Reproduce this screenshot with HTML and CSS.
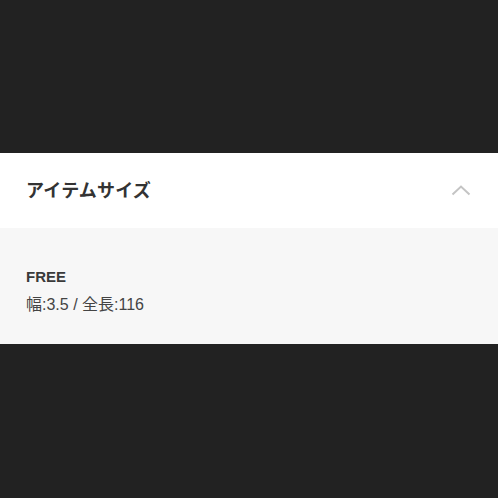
FILE: index.html
```html
<!DOCTYPE html>
<html lang="ja">
<head>
  <meta charset="UTF-8" />
  <title>アイテムサイズ</title>
  <link rel="stylesheet" href="styles.css">
</head>
<body>
  <div class="top-space"></div>

  <div class="accordion">
    <div class="accordion-header">
      <h3>アイテムサイズ</h3>
      <svg class="chevron" width="20" height="12" viewBox="0 0 20 12">
        <polyline points="1.5,10.5 10,2.5 18.5,10.5" fill="none" stroke="#c4c4c4" stroke-width="2" />
      </svg>
    </div>
    <div class="accordion-body">
      <div class="size-name">FREE</div>
      <div class="size-detail">幅:3.5 / 全長:116</div>
    </div>
  </div>
</body>
</html>
```

FILE: styles.css
```css
html, body {
  margin: 0;
  padding: 0;
  height: 100%;
  font-family: "Liberation Sans", "Noto Sans CJK JP", sans-serif;
}

body {
  background-color: #222222;
}

.top-space {
  height: 153px;
}

.accordion-header {
  height: 75px;
  box-sizing: border-box;
  background-color: #ffffff;
  display: flex;
  align-items: center;
  justify-content: space-between;
  padding: 0 27px 4px 26px;
}

.accordion-header h3 {
  margin: 0;
  font-family: "Noto Sans CJK JP", sans-serif;
  font-size: 18px;
  font-weight: bold;
  color: #333333;
  letter-spacing: 0.2px;
}

.chevron {
  display: block;
  margin-top: 2px;
}

.accordion-body {
  height: 116px;
  box-sizing: border-box;
  background-color: #f7f7f7;
  padding: 39px 26px 0;
}

.size-name {
  font-size: 15px;
  font-weight: bold;
  color: #3a3a3a;
  line-height: 20px;
}

.size-detail {
  font-size: 16px;
  color: #444444;
  line-height: 20px;
  margin-top: 8px;
}
```
